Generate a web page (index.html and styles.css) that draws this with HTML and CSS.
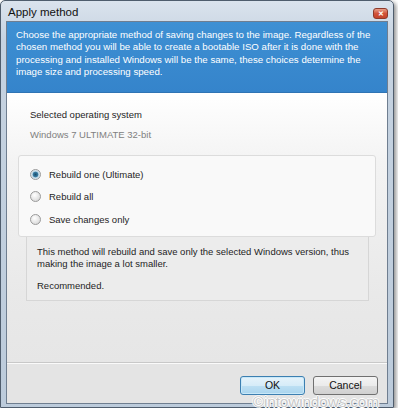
FILE: index.html
```html
<!DOCTYPE html>
<html>
  <head>
    <meta charset="utf-8" />
    <link rel="stylesheet" href="styles.css">
  </head>
  <body>
    <div class="window">
      <div class="titlebar">
        <span class="title">Apply method</span>
        <span class="close">&#x2715;</span>
      </div>
      <div class="client">
        <div class="header">
          Choose the appropriate method of saving changes to the image. Regardless of the
          chosen method you will be able to create a bootable ISO after it is done with the
          processing and installed Windows will be the same, these choices determine the
          image size and processing speed.
        </div>
        <div class="content">
          <p class="label">Selected operating system</p>
          <p class="os">Windows 7 ULTIMATE 32-bit</p>
          <div class="group">
            <label class="radio"><span class="dot checked"></span>Rebuild one (Ultimate)</label>
            <label class="radio"><span class="dot"></span>Rebuild all</label>
            <label class="radio"><span class="dot"></span>Save changes only</label>
          </div>
          <div class="desc">
            <p>This method will rebuild and save only the selected Windows version, thus making the image a lot smaller.</p>
            <p>Recommended.</p>
          </div>
        </div>
        <div class="footer">
          <span class="btn default">OK</span>
          <span class="btn">Cancel</span>
        </div>
      </div>
      <span class="watermark">&copy;intowindows.com</span>
    </div>
  </body>
</html>
```

FILE: styles.css
```css
*{
  box-sizing: border-box;
}
body{
  margin: 0px;
  background: #fff;
  font-family: "Liberation Sans", Arial, sans-serif;
  font-size: 9.5px;
  color: #1e1e1e;
}
p{
  margin: 0px;
}
.window{
  position: relative;
  width: 394px;
  height: 408px;
  padding: 0px 5px 3px 5px;
  border: 1px solid #4f5d6d;
  border-radius: 5px 5px 0px 0px;
  background: linear-gradient(#dae3ed, #c6d3e1 40px, #bccbdb);
  box-shadow: 2px 2px 4px rgba(0, 0, 0, 0.45);
  display: flex;
  flex-direction: column;
}
.titlebar{
  height: 20px;
  display: flex;
  align-items: center;
  justify-content: space-between;
}
.title{
  font-size: 11.5px;
  color: #111;
  padding-left: 2px;
  padding-top: 2px;
}
.close{
  width: 15px;
  height: 11px;
  margin-top: 4px;
  border: 1px solid #8e3a2a;
  border-radius: 3px;
  background: linear-gradient(#e8a08a, #d1533a 50%, #c4432b);
  color: #fff;
  font-size: 7px;
  font-weight: bold;
  line-height: 9px;
  text-align: center;
}
.client{
  flex: 1;
  border: 1px solid #6f7e90;
  display: flex;
  flex-direction: column;
  background: #fff;
}
.header{
  height: 71px;
  padding: 7px 8px 0px 9px;
  background: linear-gradient(#3e90d3, #3584cb);
  color: #fff;
  line-height: 12.4px;
  font-size: 9.7px;
  border-bottom: 1px solid #2f74b4;
}
.content{
  height: 270px;
  padding: 16px 11px 0px 11px;
  background: linear-gradient(#fff, #f3f3f3 70px, #e9e9e9 200px, #e6e6e6);
  border-bottom: 1px solid #c8c8c8;
}
.label{
  padding-left: 12px;
  line-height: 12px;
}
.os{
  padding-left: 12px;
  margin-top: 8px;
  line-height: 12px;
  color: #808080;
}
.group{
  margin-top: 14px;
  height: 82px;
  padding: 12px 0px 0px 11px;
  background: #f9f9f9;
  border: 1px solid #dcdcdc;
  border-radius: 3px;
  display: flex;
  flex-direction: column;
  gap: 10px;
}
.radio{
  display: flex;
  align-items: center;
  gap: 8px;
  height: 12.5px;
}
.dot{
  width: 11px;
  height: 11px;
  border-radius: 50%;
  border: 1px solid #9a9a9a;
  background: radial-gradient(circle at 40% 35%, #fff, #dedede 70%, #cfcfcf);
}
.dot.checked{
  background: radial-gradient(circle, #1e4e6a 0px, #3a7fa6 2.5px, #b9d3e2 3.2px, #eef3f6 5px);
}
.desc{
  margin: 0px 7px 0px 8px;
  height: 64px;
  padding: 9px 8px 0px 10px;
  background: #ececec;
  border: 1px solid #d6d6d6;
  border-top: none;
  line-height: 12px;
}
.desc p + p{
  margin-top: 10px;
}
.footer{
  flex: 1;
  display: flex;
  justify-content: flex-end;
  align-items: flex-start;
  gap: 8px;
  padding: 12px 9px 0px 0px;
  background: #e4e4e4;
  border-top: 1px solid #fafafa;
}
.btn{
  width: 65px;
  height: 19px;
  border: 1px solid #707070;
  border-radius: 3px;
  background: linear-gradient(#f4f4f4, #ebebeb 50%, #dcdcdc 51%, #d0d0d0);
  text-align: center;
  line-height: 17px;
  font-size: 10.5px;
  color: #111;
}
.btn.default{
  border-color: #3c7fb1;
  background: linear-gradient(#e6f3fb, #d6ecf8 50%, #bde0f3 51%, #a9d4ee);
  box-shadow: inset 0px 0px 0px 1px #c8e8f8;
}
.watermark{
  position: absolute;
  right: 14px;
  bottom: -4px;
  font-size: 15.5px;
  color: #c8c8c8;
  letter-spacing: -0.2px;
  text-shadow: 1px 0px #fff, -1px 0px #fff, 0px 1px #fff, 0px -1px #fff, 0px 0px 1px #888;
}
```
